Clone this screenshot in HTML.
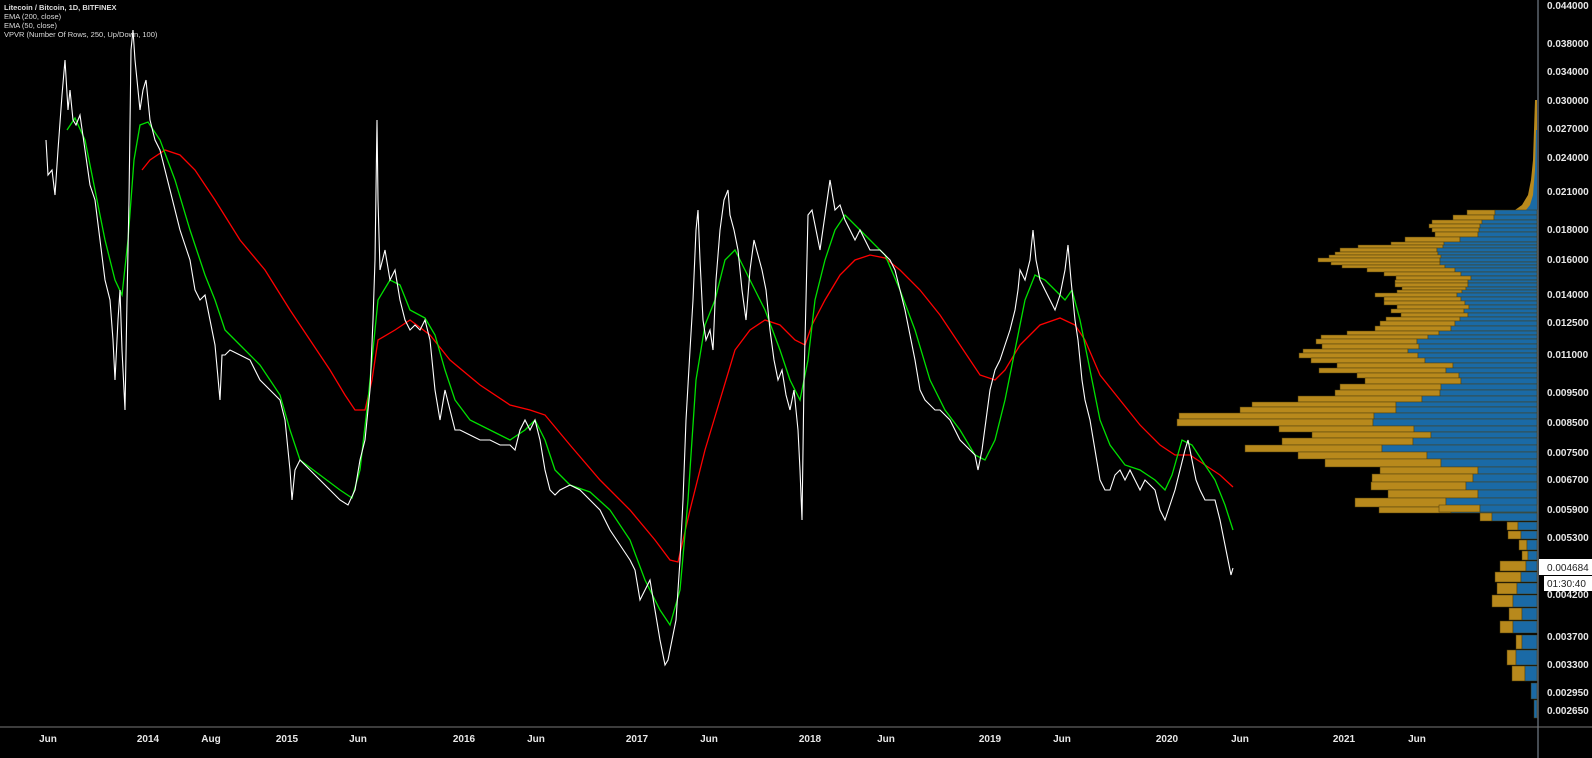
<!DOCTYPE html>
<html><head><meta charset="utf-8"><style>
html,body{margin:0;padding:0;background:#000;width:1592px;height:758px;overflow:hidden}
svg{display:block}
text{font-family:"Liberation Sans",sans-serif}
</style></head><body>
<svg width="1592" height="758" viewBox="0 0 1592 758" xmlns="http://www.w3.org/2000/svg">
<rect width="1592" height="758" fill="#000"/>
<g font-size="7.5" font-weight="bold" fill="#ddd">
<text x="4" y="10">Litecoin / Bitcoin, 1D, BITFINEX</text>
</g>
<g font-size="7.5" fill="#ddd">
<text x="4" y="19">EMA (200, close)</text>
<text x="4" y="28">EMA (50, close)</text>
<text x="4" y="37">VPVR (Number Of Rows, 250, Up/Down, 100)</text>
</g>
<!-- VPVR -->
<polygon points="1537,100 1535,100 1534,130 1533,160 1531,180 1528,195 1522,205 1515,210 1537,210" fill="#b8891c"/>
<polygon points="1537,130 1536,130 1535,170 1533,195 1530,205 1526,210 1537,210" fill="#1a6aa6"/>
<g stroke="#000" stroke-width="0.6">
<g id="r">
</g>
</g>
<g stroke="#4a3a0a" stroke-width="0.5">
<rect x="1467" y="210" width="28" height="5" fill="#b8891c"/><rect x="1495" y="210" width="42" height="5" fill="#1a6aa6"/>
<rect x="1453" y="215" width="41" height="5" fill="#b8891c"/><rect x="1494" y="215" width="43" height="5" fill="#1a6aa6"/>
<rect x="1432" y="220" width="50" height="4" fill="#b8891c"/><rect x="1482" y="220" width="55" height="4" fill="#1a6aa6"/>
<rect x="1429" y="224" width="51" height="4" fill="#b8891c"/><rect x="1480" y="224" width="57" height="4" fill="#1a6aa6"/>
<rect x="1432" y="228" width="47" height="4" fill="#b8891c"/><rect x="1479" y="228" width="58" height="4" fill="#1a6aa6"/>
<rect x="1435" y="232" width="43" height="5" fill="#b8891c"/><rect x="1478" y="232" width="59" height="5" fill="#1a6aa6"/>
<rect x="1405" y="237" width="55" height="5" fill="#b8891c"/><rect x="1460" y="237" width="77" height="5" fill="#1a6aa6"/>
<rect x="1391" y="242" width="53" height="3" fill="#b8891c"/><rect x="1444" y="242" width="93" height="3" fill="#1a6aa6"/>
<rect x="1358" y="245" width="85" height="3" fill="#b8891c"/><rect x="1443" y="245" width="94" height="3" fill="#1a6aa6"/>
<rect x="1340" y="248" width="97" height="4" fill="#b8891c"/><rect x="1437" y="248" width="100" height="4" fill="#1a6aa6"/>
<rect x="1335" y="252" width="103" height="3" fill="#b8891c"/><rect x="1438" y="252" width="99" height="3" fill="#1a6aa6"/>
<rect x="1329" y="255" width="112" height="3" fill="#b8891c"/><rect x="1441" y="255" width="96" height="3" fill="#1a6aa6"/>
<rect x="1318" y="258" width="122" height="4" fill="#b8891c"/><rect x="1440" y="258" width="97" height="4" fill="#1a6aa6"/>
<rect x="1331" y="262" width="109" height="3" fill="#b8891c"/><rect x="1440" y="262" width="97" height="3" fill="#1a6aa6"/>
<rect x="1342" y="265" width="103" height="3" fill="#b8891c"/><rect x="1445" y="265" width="92" height="3" fill="#1a6aa6"/>
<rect x="1367" y="268" width="88" height="4" fill="#b8891c"/><rect x="1455" y="268" width="82" height="4" fill="#1a6aa6"/>
<rect x="1384" y="272" width="77" height="4" fill="#b8891c"/><rect x="1461" y="272" width="76" height="4" fill="#1a6aa6"/>
<rect x="1396" y="276" width="75" height="4" fill="#b8891c"/><rect x="1471" y="276" width="66" height="4" fill="#1a6aa6"/>
<rect x="1395" y="280" width="73" height="3" fill="#b8891c"/><rect x="1468" y="280" width="69" height="3" fill="#1a6aa6"/>
<rect x="1395" y="283" width="73" height="4" fill="#b8891c"/><rect x="1468" y="283" width="69" height="4" fill="#1a6aa6"/>
<rect x="1402" y="287" width="64" height="3" fill="#b8891c"/><rect x="1466" y="287" width="71" height="3" fill="#1a6aa6"/>
<rect x="1397" y="290" width="65" height="3" fill="#b8891c"/><rect x="1462" y="290" width="75" height="3" fill="#1a6aa6"/>
<rect x="1375" y="293" width="82" height="4" fill="#b8891c"/><rect x="1457" y="293" width="80" height="4" fill="#1a6aa6"/>
<rect x="1384" y="297" width="77" height="4" fill="#b8891c"/><rect x="1461" y="297" width="76" height="4" fill="#1a6aa6"/>
<rect x="1384" y="301" width="81" height="4" fill="#b8891c"/><rect x="1465" y="301" width="72" height="4" fill="#1a6aa6"/>
<rect x="1397" y="305" width="72" height="4" fill="#b8891c"/><rect x="1469" y="305" width="68" height="4" fill="#1a6aa6"/>
<rect x="1391" y="309" width="73" height="4" fill="#b8891c"/><rect x="1464" y="309" width="73" height="4" fill="#1a6aa6"/>
<rect x="1401" y="313" width="67" height="4" fill="#b8891c"/><rect x="1468" y="313" width="69" height="4" fill="#1a6aa6"/>
<rect x="1386" y="317" width="74" height="4" fill="#b8891c"/><rect x="1460" y="317" width="77" height="4" fill="#1a6aa6"/>
<rect x="1380" y="321" width="75" height="5" fill="#b8891c"/><rect x="1455" y="321" width="82" height="5" fill="#1a6aa6"/>
<rect x="1375" y="326" width="76" height="5" fill="#b8891c"/><rect x="1451" y="326" width="86" height="5" fill="#1a6aa6"/>
<rect x="1347" y="331" width="92" height="4" fill="#b8891c"/><rect x="1439" y="331" width="98" height="4" fill="#1a6aa6"/>
<rect x="1321" y="335" width="107" height="4" fill="#b8891c"/><rect x="1428" y="335" width="109" height="4" fill="#1a6aa6"/>
<rect x="1316" y="339" width="101" height="5" fill="#b8891c"/><rect x="1417" y="339" width="120" height="5" fill="#1a6aa6"/>
<rect x="1322" y="344" width="97" height="5" fill="#b8891c"/><rect x="1419" y="344" width="118" height="5" fill="#1a6aa6"/>
<rect x="1303" y="349" width="105" height="4" fill="#b8891c"/><rect x="1408" y="349" width="129" height="4" fill="#1a6aa6"/>
<rect x="1299" y="353" width="119" height="5" fill="#b8891c"/><rect x="1418" y="353" width="119" height="5" fill="#1a6aa6"/>
<rect x="1311" y="358" width="114" height="5" fill="#b8891c"/><rect x="1425" y="358" width="112" height="5" fill="#1a6aa6"/>
<rect x="1337" y="363" width="116" height="5" fill="#b8891c"/><rect x="1453" y="363" width="84" height="5" fill="#1a6aa6"/>
<rect x="1319" y="368" width="127" height="5" fill="#b8891c"/><rect x="1446" y="368" width="91" height="5" fill="#1a6aa6"/>
<rect x="1357" y="373" width="102" height="5" fill="#b8891c"/><rect x="1459" y="373" width="78" height="5" fill="#1a6aa6"/>
<rect x="1365" y="378" width="96" height="6" fill="#b8891c"/><rect x="1461" y="378" width="76" height="6" fill="#1a6aa6"/>
<rect x="1340" y="384" width="101" height="6" fill="#b8891c"/><rect x="1441" y="384" width="96" height="6" fill="#1a6aa6"/>
<rect x="1335" y="390" width="105" height="6" fill="#b8891c"/><rect x="1440" y="390" width="97" height="6" fill="#1a6aa6"/>
<rect x="1298" y="396" width="124" height="6" fill="#b8891c"/><rect x="1422" y="396" width="115" height="6" fill="#1a6aa6"/>
<rect x="1252" y="402" width="144" height="5" fill="#b8891c"/><rect x="1396" y="402" width="141" height="5" fill="#1a6aa6"/>
<rect x="1240" y="407" width="156" height="6" fill="#b8891c"/><rect x="1396" y="407" width="141" height="6" fill="#1a6aa6"/>
<rect x="1179" y="413" width="195" height="6" fill="#b8891c"/><rect x="1374" y="413" width="163" height="6" fill="#1a6aa6"/>
<rect x="1177" y="419" width="196" height="7" fill="#b8891c"/><rect x="1373" y="419" width="164" height="7" fill="#1a6aa6"/>
<rect x="1279" y="426" width="135" height="6" fill="#b8891c"/><rect x="1414" y="426" width="123" height="6" fill="#1a6aa6"/>
<rect x="1312" y="432" width="119" height="6" fill="#b8891c"/><rect x="1431" y="432" width="106" height="6" fill="#1a6aa6"/>
<rect x="1282" y="438" width="131" height="7" fill="#b8891c"/><rect x="1413" y="438" width="124" height="7" fill="#1a6aa6"/>
<rect x="1245" y="445" width="137" height="7" fill="#b8891c"/><rect x="1382" y="445" width="155" height="7" fill="#1a6aa6"/>
<rect x="1298" y="452" width="129" height="7" fill="#b8891c"/><rect x="1427" y="452" width="110" height="7" fill="#1a6aa6"/>
<rect x="1325" y="459" width="116" height="8" fill="#b8891c"/><rect x="1441" y="459" width="96" height="8" fill="#1a6aa6"/>
<rect x="1380" y="467" width="98" height="7" fill="#b8891c"/><rect x="1478" y="467" width="59" height="7" fill="#1a6aa6"/>
<rect x="1372" y="474" width="101" height="8" fill="#b8891c"/><rect x="1473" y="474" width="64" height="8" fill="#1a6aa6"/>
<rect x="1371" y="482" width="95" height="8" fill="#b8891c"/><rect x="1466" y="482" width="71" height="8" fill="#1a6aa6"/>
<rect x="1388" y="490" width="90" height="8" fill="#b8891c"/><rect x="1478" y="490" width="59" height="8" fill="#1a6aa6"/>
<rect x="1355" y="498" width="91" height="9" fill="#b8891c"/><rect x="1446" y="498" width="91" height="9" fill="#1a6aa6"/>
<rect x="1379" y="507" width="72" height="6" fill="#b8891c"/><rect x="1451" y="507" width="86" height="6" fill="#1a6aa6"/>
<rect x="1439" y="505" width="41" height="7" fill="#b8891c"/><rect x="1480" y="505" width="57" height="7" fill="#1a6aa6"/>
<rect x="1480" y="513" width="12" height="8" fill="#b8891c"/><rect x="1492" y="513" width="45" height="8" fill="#1a6aa6"/>
<rect x="1507" y="522" width="11" height="8" fill="#b8891c"/><rect x="1518" y="522" width="19" height="8" fill="#1a6aa6"/>
<rect x="1508" y="531" width="13" height="8" fill="#b8891c"/><rect x="1521" y="531" width="16" height="8" fill="#1a6aa6"/>
<rect x="1519" y="540" width="8" height="10" fill="#b8891c"/><rect x="1527" y="540" width="10" height="10" fill="#1a6aa6"/>
<rect x="1522" y="551" width="6" height="9" fill="#b8891c"/><rect x="1528" y="551" width="9" height="9" fill="#1a6aa6"/>
<rect x="1500" y="561" width="26" height="10" fill="#b8891c"/><rect x="1526" y="561" width="11" height="10" fill="#1a6aa6"/>
<rect x="1495" y="572" width="26" height="10" fill="#b8891c"/><rect x="1521" y="572" width="16" height="10" fill="#1a6aa6"/>
<rect x="1497" y="583" width="20" height="11" fill="#b8891c"/><rect x="1517" y="583" width="20" height="11" fill="#1a6aa6"/>
<rect x="1492" y="595" width="21" height="12" fill="#b8891c"/><rect x="1513" y="595" width="24" height="12" fill="#1a6aa6"/>
<rect x="1509" y="608" width="13" height="12" fill="#b8891c"/><rect x="1522" y="608" width="15" height="12" fill="#1a6aa6"/>
<rect x="1500" y="621" width="13" height="12" fill="#b8891c"/><rect x="1513" y="621" width="24" height="12" fill="#1a6aa6"/>
<rect x="1516" y="635" width="6" height="14" fill="#b8891c"/><rect x="1522" y="635" width="15" height="14" fill="#1a6aa6"/>
<rect x="1507" y="650" width="9" height="15" fill="#b8891c"/><rect x="1516" y="650" width="21" height="15" fill="#1a6aa6"/>
<rect x="1512" y="666" width="13" height="15" fill="#b8891c"/><rect x="1525" y="666" width="12" height="15" fill="#1a6aa6"/>
<rect x="1531" y="683" width="6" height="16" fill="#1a6aa6"/>
<rect x="1534" y="700" width="3" height="18" fill="#1a6aa6"/>
</g>
<!-- lines -->
<polyline fill="none" stroke="#ff0000" stroke-width="1.3" points="142,170 150,160 165,150 180,155 195,170 215,200 240,240 265,270 290,310 310,340 330,370 345,395 355,410 365,410 372,380 378,340 395,330 410,320 430,335 450,360 480,385 510,405 530,410 545,415 570,445 600,480 630,510 655,540 670,560 678,562 690,510 705,450 720,400 735,350 750,330 765,320 780,325 795,340 805,345 812,325 825,300 840,275 855,260 870,255 885,258 900,270 920,290 940,315 960,345 980,375 995,380 1005,370 1020,345 1040,325 1060,318 1075,325 1085,340 1100,375 1120,400 1140,425 1160,445 1175,455 1190,455 1205,465 1220,475 1233,487"/>
<polyline fill="none" stroke="#00e000" stroke-width="1.3" points="67,130 75,118 85,140 95,190 105,240 115,280 122,295 128,240 134,160 140,125 148,122 160,140 175,180 190,230 205,275 215,300 225,330 240,345 260,365 280,395 290,430 300,460 320,475 340,490 352,498 360,470 368,400 378,300 390,280 400,285 410,310 425,318 435,335 445,370 455,400 470,420 490,430 510,440 525,430 535,420 545,440 555,470 570,485 590,492 610,510 630,540 645,580 660,610 670,625 680,590 688,500 696,380 705,325 715,300 725,260 735,250 745,270 755,290 765,310 780,350 790,380 800,400 808,360 815,300 825,260 835,230 845,215 855,225 870,240 885,255 900,290 915,330 930,380 945,410 960,430 975,455 985,460 995,440 1005,400 1015,350 1025,300 1035,275 1045,280 1055,290 1065,300 1072,290 1080,320 1090,370 1100,420 1110,445 1125,465 1140,470 1155,480 1165,490 1172,475 1182,440 1192,445 1205,465 1215,480 1225,505 1233,530"/>
<polyline fill="none" stroke="#ffffff" stroke-width="1.1" points="46,140 48,175 52,170 55,195 58,150 62,95 65,60 68,110 70,90 73,120 76,125 80,115 85,150 90,185 95,200 100,240 105,280 110,300 113,340 115,380 118,320 120,290 122,350 125,410 127,300 129,200 131,50 133,30 135,60 137,80 140,110 143,90 146,80 150,120 155,140 160,150 165,170 170,190 175,210 180,230 185,245 190,260 195,290 200,300 205,295 210,320 215,345 220,400 222,355 225,355 230,350 240,355 250,360 260,380 270,390 280,400 285,420 290,470 292,500 295,470 300,460 310,470 320,480 330,490 340,500 348,505 355,490 360,460 365,440 370,390 373,320 375,260 377,120 378,200 380,270 385,250 390,280 395,270 400,300 405,320 410,330 415,325 420,330 425,320 430,340 435,390 440,420 445,390 450,410 455,430 460,430 470,435 480,440 490,440 500,445 510,445 515,450 520,430 525,420 530,430 535,420 540,440 545,470 550,490 555,495 560,490 570,485 580,490 590,500 600,510 610,530 620,545 630,560 635,570 640,600 645,590 650,580 655,610 660,640 665,665 668,660 672,640 676,620 680,560 683,500 686,420 690,350 693,300 696,230 698,210 700,260 703,320 706,340 710,330 713,350 716,280 720,230 724,200 728,190 730,215 734,230 738,250 742,290 746,320 750,270 754,240 758,255 762,270 766,290 770,330 774,360 778,380 782,370 786,395 790,410 794,390 798,430 800,470 802,520 804,380 806,300 808,215 812,210 816,230 820,250 825,215 830,180 835,210 840,205 845,220 850,230 855,240 860,230 865,240 870,250 880,250 890,260 895,270 900,290 905,310 910,335 915,360 920,390 925,400 930,405 935,410 940,410 945,415 950,420 955,430 960,440 965,445 970,450 975,455 978,470 982,450 986,420 990,390 995,370 1000,360 1005,345 1010,330 1015,310 1018,290 1020,270 1025,280 1030,260 1033,230 1036,260 1040,280 1045,290 1050,300 1055,310 1060,295 1065,270 1068,245 1071,280 1075,320 1078,340 1082,380 1085,400 1090,420 1095,450 1100,480 1105,490 1110,490 1115,475 1120,470 1125,480 1130,470 1135,480 1140,490 1145,480 1150,485 1155,490 1160,510 1165,520 1170,505 1175,490 1180,470 1185,450 1188,440 1192,460 1196,480 1200,490 1205,500 1210,500 1215,500 1220,520 1224,540 1228,560 1231,575 1233,568"/>
<!-- axes -->
<line x1="1538" y1="0" x2="1538" y2="758" stroke="#8a96a3" stroke-width="1"/>
<line x1="0" y1="727" x2="1592" y2="727" stroke="#777" stroke-width="1"/>
<g font-size="10" fill="#e8e8e8" font-weight="bold">
<text x="1547" y="9">0.044000</text>
<text x="1547" y="47">0.038000</text>
<text x="1547" y="75">0.034000</text>
<text x="1547" y="104">0.030000</text>
<text x="1547" y="132">0.027000</text>
<text x="1547" y="161">0.024000</text>
<text x="1547" y="195">0.021000</text>
<text x="1547" y="233">0.018000</text>
<text x="1547" y="263">0.016000</text>
<text x="1547" y="298">0.014000</text>
<text x="1547" y="326">0.012500</text>
<text x="1547" y="358">0.011000</text>
<text x="1547" y="396">0.009500</text>
<text x="1547" y="426">0.008500</text>
<text x="1547" y="456">0.007500</text>
<text x="1547" y="483">0.006700</text>
<text x="1547" y="513">0.005900</text>
<text x="1547" y="541">0.005300</text>
<text x="1547" y="598">0.004200</text>
<text x="1547" y="640">0.003700</text>
<text x="1547" y="668">0.003300</text>
<text x="1547" y="696">0.002950</text>
<text x="1547" y="714">0.002650</text>
</g>
<rect x="1539" y="559" width="53" height="16" fill="#fff"/>
<rect x="1544" y="576" width="48" height="15" fill="#fff"/>
<g font-size="10" fill="#222">
<text x="1547" y="571">0.004684</text>
<text x="1547" y="587">01:30:40</text>
</g>
<g font-size="10" fill="#e8e8e8" font-weight="bold" text-anchor="middle">
<text x="48" y="742">Jun</text>
<text x="148" y="742">2014</text>
<text x="211" y="742">Aug</text>
<text x="287" y="742">2015</text>
<text x="358" y="742">Jun</text>
<text x="464" y="742">2016</text>
<text x="536" y="742">Jun</text>
<text x="637" y="742">2017</text>
<text x="709" y="742">Jun</text>
<text x="810" y="742">2018</text>
<text x="886" y="742">Jun</text>
<text x="990" y="742">2019</text>
<text x="1062" y="742">Jun</text>
<text x="1167" y="742">2020</text>
<text x="1240" y="742">Jun</text>
<text x="1344" y="742">2021</text>
<text x="1417" y="742">Jun</text>
</g>
</svg>
</body></html>
